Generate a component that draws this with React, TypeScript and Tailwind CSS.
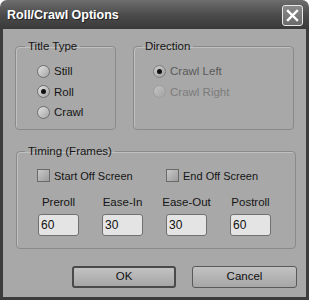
import React from "react";

const font = { fontFamily: '"Liberation Sans", Arial, sans-serif' };

function Radio({ checked, label, disabled, faint }: { checked?: boolean; label: string; disabled?: boolean; faint?: boolean }) {
  return (
    <div className="flex items-center h-[20.5px]">
      <div
        className={
          "w-[13px] h-[13px] rounded-full flex items-center justify-center " +
          (faint
            ? "border border-[#9c9c9c] bg-gradient-to-br from-[#c4c4c4] to-[#a2a2a2]"
            : disabled
            ? "border border-[#7e7e7e] bg-gradient-to-br from-[#cfcfcf] to-[#9e9e9e]"
            : "border border-[#6e6e6e] bg-gradient-to-br from-[#e4e4e4] to-[#a4a4a4]")
        }
      >
        {checked && <div className="w-[5px] h-[5px] rounded-full bg-[#111]" />}
      </div>
      <span
        className={
          "ml-[4px] text-[11.5px] leading-[14px] " +
          (faint ? "text-[#7c7c7c]" : disabled ? "text-[#5a5a5a]" : "text-[#151515]")
        }
      >
        {label}
      </span>
    </div>
  );
}

function Check({ label }: { label: string }) {
  return (
    <div className="flex items-center h-[13px]">
      <div className="w-[13px] h-[13px] border border-[#6a6a6a] bg-gradient-to-br from-[#c8c8c8] to-[#9c9c9c]" />
      <span className="ml-[4px] text-[11px] leading-[14px] text-[#151515] whitespace-nowrap">{label}</span>
    </div>
  );
}

function Field({ value }: { value: string }) {
  return (
    <div className="w-[41px] h-[22px] rounded-[3px] border border-[#707070] bg-[#e4e4e4] flex items-center pl-[2px] text-[12px] leading-[14px] text-[#111]">
      {value}
    </div>
  );
}

export default function App() {
  return (
    <div className="w-[309px] h-[300px] bg-white flex flex-col" style={font}>
      <div className="h-[29px] rounded-t-[7px] bg-gradient-to-b from-[#6e6e6e] via-[#4c4c4c] to-[#3a3a3a] flex items-center pl-[7px] pr-[6px] shrink-0">
        <span className="text-white font-bold text-[12.5px] leading-[16px] [text-shadow:1px_1px_0_#222] flex-1">Roll/Crawl Options</span>
        <div className="w-[21px] h-[21px] rounded-[3px] border border-[#e8e8e8] bg-gradient-to-b from-[#8a8a8a] to-[#6a6a6a] flex items-center justify-center mb-[-1px]">
          <svg width="13" height="13" viewBox="0 0 13 13">
            <path d="M2 2 L11 11 M11 2 L2 11" stroke="white" strokeWidth="2.4" strokeLinecap="square" />
          </svg>
        </div>
      </div>
      <div className="flex-1 bg-[#a8a8a8] border-x-[3px] border-b-[3px] border-[#3c3c3c] pl-[12px] pt-[10px] flex flex-col">
        <div className="flex">
          <fieldset className="w-[101px] h-[91px] border border-[#8a8a8a] rounded-[4px] p-0 m-0 shadow-[inset_1px_1px_0_#c0c0c0]">
            <legend className="ml-[9px] px-[3px] text-[11.5px] leading-[14px] text-[#151515]">Title Type</legend>
            <div className="pl-[21px] pt-[8px]">
              <Radio label="Still" />
              <Radio label="Roll" checked />
              <Radio label="Crawl" />
            </div>
          </fieldset>
          <fieldset className="ml-[17px] w-[161px] h-[91px] border border-[#8a8a8a] rounded-[4px] p-0 m-0 shadow-[inset_1px_1px_0_#c0c0c0]">
            <legend className="ml-[8px] px-[3px] text-[11.5px] leading-[14px] text-[#151515]">Direction</legend>
            <div className="pl-[19px] pt-[8px]">
              <Radio label="Crawl Left" checked disabled />
              <Radio label="Crawl Right" faint />
            </div>
          </fieldset>
        </div>
        <fieldset className="ml-[1px] mt-[14px] w-[280px] h-[105px] border border-[#8a8a8a] rounded-[4px] p-0 m-0 shadow-[inset_1px_1px_0_#c0c0c0]">
          <legend className="ml-[8px] px-[3px] text-[11.5px] leading-[14px] text-[#151515]">Timing (Frames)</legend>
          <div className="pl-[21px] pt-[11px] grid grid-cols-[41px_41px_41px_41px] gap-x-[23px]">
            <div className="col-span-2 ml-[-1px]">
              <Check label="Start Off Screen" />
            </div>
            <div className="col-span-2">
              <Check label="End Off Screen" />
            </div>
            <div className="col-span-4 h-[13px]" />
            {["Preroll", "Ease-In", "Ease-Out", "Postroll"].map((t) => (
              <div key={t} className="flex justify-center whitespace-nowrap text-[11.5px] leading-[14px] text-[#151515] h-[19px]">
                {t}
              </div>
            ))}
            <Field value="60" />
            <Field value="30" />
            <Field value="30" />
            <Field value="60" />
          </div>
        </fieldset>
        <div className="flex mt-[17px] pl-[57px]">
          <div className="w-[104px] h-[22px] rounded-[3px] border-2 border-[#4a4a4a] bg-gradient-to-b from-[#c2c2c2] to-[#a6a6a6] flex items-center justify-center text-[11.5px] text-[#111]">
            OK
          </div>
          <div className="ml-[16px] w-[105px] h-[22px] rounded-[3px] border border-[#5a5a5a] bg-gradient-to-b from-[#c2c2c2] to-[#a6a6a6] flex items-center justify-center text-[11.5px] text-[#111]">
            Cancel
          </div>
        </div>
      </div>
    </div>
  );
}
